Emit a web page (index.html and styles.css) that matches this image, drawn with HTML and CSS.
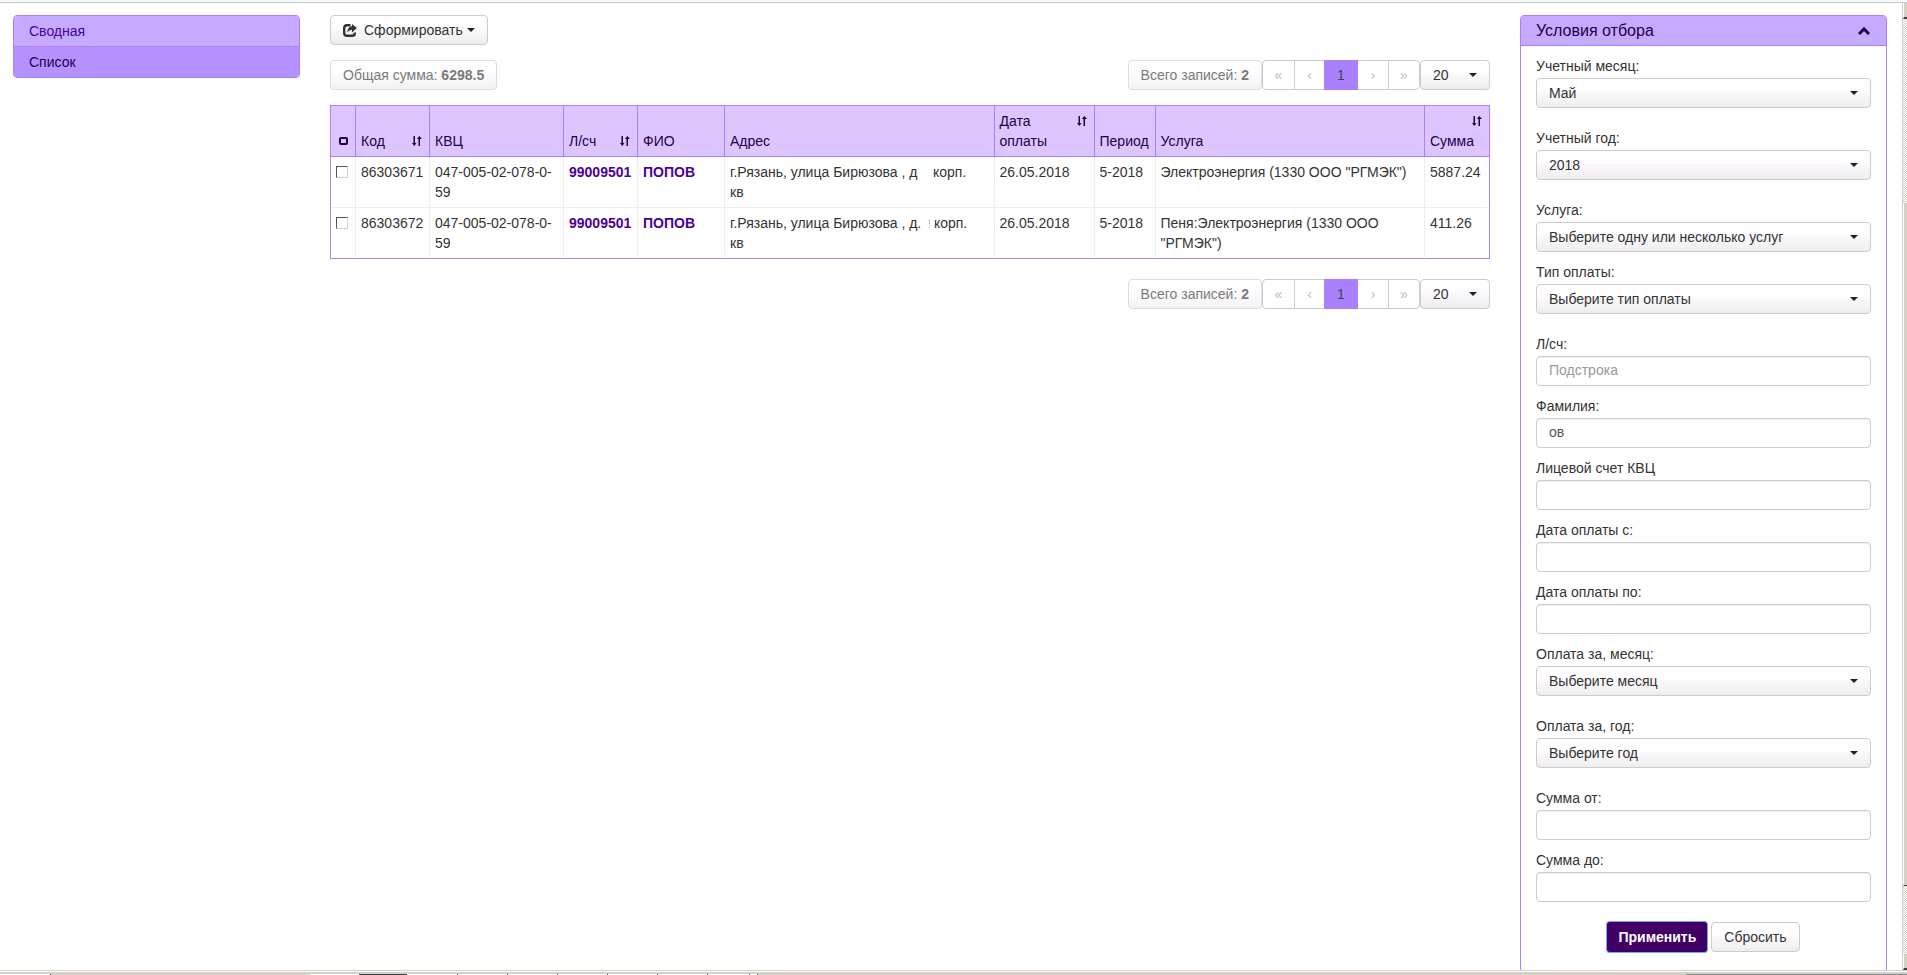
FILE: index.html
```html
<!DOCTYPE html>
<html lang="ru">
<head>
<meta charset="utf-8">
<title>Список оплат</title>
<link rel="stylesheet" href="styles.css">
</head>
<body>
<svg class="sprite" aria-hidden="true">
  <symbol id="sort" viewBox="0 0 10 10">
    <path d="M1.500 0h1.500v7H4.500L2.300 10 0 7h1.500zM6.500 10H8V3h2L7.300 0 4.900 3h1.600z" fill="currentColor"/>
  </symbol>
</svg>
<div class="window">
  <main class="page">
    <nav class="menu">
      <a href="#summary">Сводная</a>
      <a href="#list" class="active">Список</a>
    </nav>

    <section class="content">
      <div>
        <button type="button" class="btn">
          <svg class="icon-share" viewBox="0 0 14 13" aria-hidden="true">
            <path d="M7.500 1.200H4Q1.200 1.200 1.200 4v5Q1.200 11.800 4 11.800H9Q11.800 11.800 11.800 9.500V8.500" fill="none" stroke="currentColor" stroke-width="2.400"/>
            <path d="M9 0l5 4-5 4.500V5.800Q6 5.700 4.300 8.500 4.500 2.600 9 2.200z" fill="currentColor"/>
          </svg>
          Сформировать
          <span class="caret"></span>
        </button>
      </div>

      <div class="bar">
        <span class="btn info">Общая сумма: <b>6298.5</b></span>
        <div class="pager">
          <span class="btn info">Всего записей: <b>2</b></span>
          <div class="pages">
            <button type="button">«</button>
            <button type="button">‹</button>
            <button type="button" class="current">1</button>
            <button type="button">›</button>
            <button type="button">»</button>
          </div>
          <span class="select size"><select aria-label="Записей на странице"><option>20</option></select></span>
        </div>
      </div>

      <table class="grid">
        <colgroup>
          <col class="c-check"><col class="c-code"><col class="c-kvc"><col class="c-code"><col class="c-name"><col><col class="c-date"><col class="c-period"><col><col class="c-sum">
        </colgroup>
        <thead>
          <tr>
            <th><span class="check-all"></span></th>
            <th><div class="head">Код <svg class="sort"><use href="#sort"/></svg></div></th>
            <th>КВЦ</th>
            <th><div class="head">Л/сч <svg class="sort"><use href="#sort"/></svg></div></th>
            <th>ФИО</th>
            <th>Адрес</th>
            <th><div class="head">Дата оплаты <svg class="sort"><use href="#sort"/></svg></div></th>
            <th>Период</th>
            <th>Услуга</th>
            <th><div class="head wrapped">Сумма <svg class="sort"><use href="#sort"/></svg></div></th>
          </tr>
        </thead>
        <tbody>
          <tr>
            <td><input type="checkbox" class="check" aria-label="86303671"></td>
            <td>86303671</td>
            <td>047-005-02-078-0-59</td>
            <td><a href="#99009501">99009501</a></td>
            <td><a href="#popov">ПОПОВ</a></td>
            <td>г.Рязань, улица Бирюзова , д&nbsp;&nbsp;&nbsp; корп.<br>кв</td>
            <td>26.05.2018</td>
            <td>5-2018</td>
            <td>Электроэнергия (1330 ООО "РГМЭК")</td>
            <td>5887.24</td>
          </tr>
          <tr>
            <td><input type="checkbox" class="check" aria-label="86303672"></td>
            <td>86303672</td>
            <td>047-005-02-078-0-59</td>
            <td><a href="#99009501">99009501</a></td>
            <td><a href="#popov">ПОПОВ</a></td>
            <td>г.Рязань, улица Бирюзова , д.&nbsp;&nbsp;<span class="tick"></span> корп.<br>кв</td>
            <td>26.05.2018</td>
            <td>5-2018</td>
            <td>Пеня:Электроэнергия (1330 ООО "РГМЭК")</td>
            <td>411.26</td>
          </tr>
        </tbody>
      </table>

      <div class="bar bottom">
        <div class="pager">
          <span class="btn info">Всего записей: <b>2</b></span>
          <div class="pages">
            <button type="button">«</button>
            <button type="button">‹</button>
            <button type="button" class="current">1</button>
            <button type="button">›</button>
            <button type="button">»</button>
          </div>
          <span class="select size"><select aria-label="Записей на странице"><option>20</option></select></span>
        </div>
      </div>
    </section>

    <form class="filter">
      <h2 class="filter-head">Условия отбора
        <svg class="chevron" viewBox="0 0 12 8" aria-hidden="true"><path d="M1 7l5-5 5 5" fill="none" stroke="currentColor" stroke-width="3"/></svg>
      </h2>
      <div class="filter-body">
        <div class="field wide"><label for="month">Учетный месяц:</label><span class="select"><select id="month"><option>Май</option></select></span></div>
        <div class="field wide"><label for="year">Учетный год:</label><span class="select"><select id="year"><option>2018</option></select></span></div>
        <div class="field"><label for="service">Услуга:</label><span class="select"><select id="service"><option>Выберите одну или несколько услуг</option></select></span></div>
        <div class="field wide"><label for="type">Тип оплаты:</label><span class="select"><select id="type"><option>Выберите тип оплаты</option></select></span></div>
        <div class="field"><label for="account">Л/сч:</label><input id="account" type="text" placeholder="Подстрока"></div>
        <div class="field"><label for="surname">Фамилия:</label><input id="surname" type="text" value="ов"></div>
        <div class="field"><label for="kvc">Лицевой счет КВЦ</label><input id="kvc" type="text"></div>
        <div class="field"><label for="from">Дата оплаты с:</label><input id="from" type="text"></div>
        <div class="field"><label for="to">Дата оплаты по:</label><input id="to" type="text"></div>
        <div class="field wide"><label for="pay-month">Оплата за, месяц:</label><span class="select"><select id="pay-month"><option>Выберите месяц</option></select></span></div>
        <div class="field wide"><label for="pay-year">Оплата за, год:</label><span class="select"><select id="pay-year"><option>Выберите год</option></select></span></div>
        <div class="field"><label for="sum-from">Сумма от:</label><input id="sum-from" type="text"></div>
        <div class="field wide"><label for="sum-to">Сумма до:</label><input id="sum-to" type="text"></div>
        <div class="actions">
          <button type="submit" class="btn primary">Применить</button>
          <button type="reset" class="btn">Сбросить</button>
        </div>
      </div>
    </form>
  </main>
  <div class="scrollbar">
    <span class="arrow"></span>
    <span class="track"></span>
    <span class="thumb"></span>
    <span class="track-end"></span>
    <span class="arrow"></span>
  </div>
</div>
<footer class="status"><div class="taskbar"></div></footer>
</body>
</html>
```
FILE: styles.css
```css
* { box-sizing: border-box; }

body {
  margin: 0;
  height: 100vh;
  display: flex;
  flex-direction: column;
  overflow: hidden;
  background: #fff;
  color: #333;
  font: 14px/20px "Liberation Sans", Arial, sans-serif;
  border-top: 2px solid #f5f9fe;
}

button, input, select { font: inherit; color: inherit; margin: 0; }
a { text-decoration: none; }
.sprite { display: none; }

.window {
  flex: 1;
  min-height: 0;
  display: flex;
  border-top: 1px solid #c5c9d0;
}

.page {
  flex: 1;
  min-width: 0;
  overflow: hidden;
  display: grid;
  grid-template-columns: 287fr 1160fr 367fr;
  column-gap: 30px;
  align-items: start;
  padding: 12px 15px 0 13px;
}

/* Side menu */
.menu {
  border: 1px solid #aa80ff;
  border-radius: 4px;
  overflow: hidden;
}
.menu a {
  display: block;
  padding: 5px 15px;
  background: #c6aaff;
  color: #4400aa;
}
.menu a.active {
  border-top: 1px solid #aa80ff;
  background: #b591ff;
  color: #1c0055;
}

/* Buttons */
.btn {
  display: inline-flex;
  align-items: center;
  height: 30px;
  padding: 0 12px;
  border: 1px solid #ccc;
  border-radius: 4px;
  background: linear-gradient(#fff, #fdfbfe 45%, #f8f6f9 55%, #f4f1f4 85%, #ececec);
  white-space: nowrap;
}
.info { opacity: .65; white-space: pre; }
.icon-share { width: 14px; height: 13px; margin-right: 7px; }
.caret {
  margin-left: 4px;
  border: 4px solid transparent;
  border-top-color: #222;
  border-bottom: 0;
}
.primary {
  padding: 0 10px;
  background: #400066;
  border-color: #400066;
  border-radius: 2px;
  color: #fff;
  font-weight: bold;
  outline: 1px solid #6fa8ff;
}

/* Drop-downs */
.select { position: relative; display: block; }
.select::after {
  content: "";
  position: absolute;
  right: 13px;
  top: 13px;
  border: 4px solid transparent;
  border-top-color: #222;
  border-bottom: 0;
  pointer-events: none;
}
.select select {
  appearance: none;
  display: block;
  width: 100%;
  height: 30px;
  padding: 0 28px 0 12px;
  border: 1px solid #ccc;
  border-radius: 4px;
  background: linear-gradient(#fff, #fdfbfe 45%, #f8f6f9 55%, #f4f1f4 85%, #ececec);
}

/* Main column */
.content { min-width: 0; display: flex; flex-direction: column; gap: 15px; }
.content > div:first-child { display: flex; }
.bar { display: flex; justify-content: space-between; }
.bar.bottom { padding-top: 5px; }
.pager { display: flex; margin-left: auto; }
.pages {
  display: flex;
  border: 1px solid #ccc;
  border-radius: 4px;
}
.pages button {
  width: 30px;
  padding: 0;
  border: 0;
  border-left: 1px solid #ccc;
  background: none;
  color: #bbb;
}
.pages button:first-child { width: 31px; border-left: 0; }
.pages button:last-child { width: 31px; }
.pages .current {
  width: 34px;
  margin: -1px 0;
  border: 0;
  background: #aa80ff;
  color: #444;
}
.pages .current + button { border-left: 0; }
.size { width: 70px; }

/* Records */
.grid {
  width: 100%;
  table-layout: fixed;
  border-collapse: separate;
  border-spacing: 0;
  border: 1px solid #aa80ff;
  border-bottom: 0;
}
.c-check { width: 24px; }
.c-code { width: 74px; }
.c-kvc { width: 134px; }
.c-name { width: 87px; }
.c-date { width: 100px; }
.c-period { width: 61px; }
.c-sum { width: 65px; }
.grid th {
  padding: 5px;
  border-left: 1px solid #aa80ff;
  border-bottom: 1px solid #aa80ff;
  background: #ddc6ff;
  color: #1c0049;
  font-weight: normal;
  text-align: left;
  vertical-align: bottom;
}
.grid td {
  padding: 5px;
  border-left: 1px solid #eee;
  border-bottom: 1px solid #eee;
  vertical-align: top;
}
.grid tr > :first-child { border-left: 0; }
.grid tr:last-child td { border-bottom-color: #aa80ff; }
.grid td a { color: #4b0096; font-weight: bold; }
.head { display: flex; justify-content: space-between; }
.head.wrapped { flex-direction: column-reverse; }
.head.wrapped .sort { align-self: flex-end; margin-bottom: 5px; }
.sort { flex: none; width: 10px; height: 10px; margin: 5px 2px 0 0; }
.check-all {
  display: block;
  width: 9px;
  height: 8px;
  margin: 0 0 6px 3px;
  border: 2px solid #1c0049;
  border-radius: 2px;
}
.check {
  appearance: none;
  display: block;
  width: 12px;
  height: 12px;
  margin-top: 4px;
  border: 1px solid #d4d0c8;
  border-top-color: #555;
  border-left-color: #555;
}
.tick { display: inline-block; width: 1px; height: 8px; border-left: 1px dotted #aaa; }

/* Filter panel */
.filter {
  border: 1px solid #aa80ff;
  border-radius: 4px;
  overflow: hidden;
}
.filter-head {
  display: flex;
  align-items: center;
  justify-content: space-between;
  margin: 0;
  height: 30px;
  padding: 0 16px 0 15px;
  border-bottom: 1px solid #aa80ff;
  background: #c6aaff;
  color: #1c0049;
  font-size: 16px;
  font-weight: normal;
}
.chevron { width: 12px; height: 8px; }
.filter-body { padding: 10px 15px 20px; }
.field { margin-bottom: 10px; }
.field.wide { margin-bottom: 20px; }
.field label { display: block; margin-bottom: 2px; }
.field input {
  display: block;
  width: 100%;
  height: 30px;
  padding: 0 12px 2px;
  border: 1px solid #ccc;
  border-radius: 4px;
  background: #fff;
  box-shadow: inset 0 1px 1px #f3eeee;
  color: #555;
}
.field input::placeholder { color: #999; }
.actions { display: flex; justify-content: center; gap: 4px; }

/* Window scrollbar */
.scrollbar {
  width: 5px;
  display: flex;
  flex-direction: column;
  border-left: 1px solid #d4d0c8;
}
.arrow {
  height: 16px;
  border-left: 1px solid #fff;
  border-bottom: 2px solid #404040;
  background: #d4d0c8;
}
.track, .track-end { background: repeating-conic-gradient(#d4d0c8 0 25%, #fff 0 50%) 0 0 / 2px 2px; }
.track { flex: 184; }
.thumb {
  flex: 683;
  border-left: 1px solid #fff;
  border-bottom: 1px solid #404040;
  background: #d4d0c8;
}
.track-end { flex: 68; }

/* Bottom edge */
.status {
  height: 5px;
  padding-top: 4px;
  background: linear-gradient(#d4d0c8 1px, #fff 1px 2px, #d4d0c8 2px);
}
.taskbar {
  height: 1px;
  background: linear-gradient(90deg, #fff 50px, #444 50px 51px, #d4d0c8 51px 310px, #fff 310px 359px, #444 359px 407px, #fff 407px 457px, #444 457px 458px, #fff 458px 507px, #444 507px 508px, #fff 508px 557px, #444 557px 558px, #fff 558px 607px, #444 607px 608px, #fff 608px 657px, #444 657px 658px, #fff 658px 707px, #444 707px 708px, #fff 708px 749px, #444 749px 750px, #fff 750px 757px, #444 757px 758px, #d4d0c8 758px 1686px, #888 1686px);
}
```
